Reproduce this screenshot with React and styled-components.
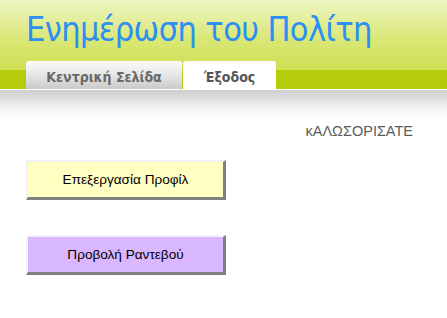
import React from "react";
import styled, { createGlobalStyle } from "styled-components";

const GlobalStyle = createGlobalStyle`
  html, body {
    margin: 0;
    padding: 0;
    background: #ffffff;
  }
  body {
    font-family: "Liberation Sans", Arial, sans-serif;
  }
`;

const Page = styled.div`
  width: 447px;
  min-height: 318px;
  background: #ffffff;
`;

const Header = styled.header`
  display: flex;
  flex-direction: column;
  padding-left: 26px;
  background: linear-gradient(
    to bottom,
    #eef5c2 0px,
    #d9e775 40px,
    #cfe052 70px,
    #b5cc0b 70px,
    #b3cb09 89px
  );
  border-bottom: 1px solid #ffffff;
`;

const Title = styled.h1`
  margin: 0;
  height: 61px;
  box-sizing: border-box;
  padding-top: 8px;
  font-family: "DejaVu Sans Condensed", "DejaVu Sans", sans-serif;
  font-weight: normal;
  font-size: 34px;
  letter-spacing: -0.6px;
  line-height: 42px;
  color: #2c8ff2;
  white-space: nowrap;
`;

const Tabs = styled.nav`
  display: flex;
  align-items: flex-end;
  height: 28px;
`;

const Tab = styled.a`
  display: flex;
  align-items: center;
  justify-content: center;
  box-sizing: border-box;
  width: ${(p) => p.$width}px;
  height: 28px;
  padding-top: 3px;
  border-radius: 3px 3px 0 0;
  font-family: "DejaVu Sans Condensed", "DejaVu Sans", sans-serif;
  font-weight: bold;
  font-size: 14px;
  text-decoration: none;
  color: ${(p) => (p.$active ? "#555555" : "#686868")};
  background: ${(p) =>
    p.$active
      ? "#ffffff"
      : "linear-gradient(to bottom, #fbfbfb 0%, #e6e6e6 50%, #cacaca 100%)"};
  & + & {
    margin-left: 1px;
  }
`;

const Main = styled.main`
  display: flex;
  flex-direction: column;
  align-items: flex-start;
  padding: 33px 34px 40px 26px;
  background: linear-gradient(to bottom, #cecece 0px, #f2f2f2 18px, #ffffff 28px)
    no-repeat;
`;

const Welcome = styled.div`
  align-self: flex-end;
  font-size: 14.5px;
  line-height: 16px;
  color: #5c5c5c;
`;

const ActionButton = styled.button`
  box-sizing: border-box;
  width: 200px;
  height: 40px;
  margin-top: ${(p) => p.$gap}px;
  border-style: solid;
  border-width: 2px 3px 3px 2px;
  border-color: #f2f2f2 #808080 #808080 #f2f2f2;
  background: ${(p) => p.$color};
  font-family: "Liberation Sans", Arial, sans-serif;
  font-size: 13.6px;
  color: #000000;
  cursor: pointer;
`;

export default function App() {
  return (
    <Page>
      <GlobalStyle />
      <Header>
        <Title>Ενημέρωση του Πολίτη</Title>
        <Tabs>
          <Tab $width={156}>Κεντρική Σελίδα</Tab>
          <Tab $width={93} $active>
            Έξοδος
          </Tab>
        </Tabs>
      </Header>
      <Main>
        <Welcome>κΑΛΩΣΟΡΙΣΑΤΕ</Welcome>
        <ActionButton $gap={21} $color="#ffffc2">
          Επεξεργασία Προφίλ
        </ActionButton>
        <ActionButton $gap={35} $color="#d9b7ff">
          Προβολή Ραντεβού
        </ActionButton>
      </Main>
    </Page>
  );
}
